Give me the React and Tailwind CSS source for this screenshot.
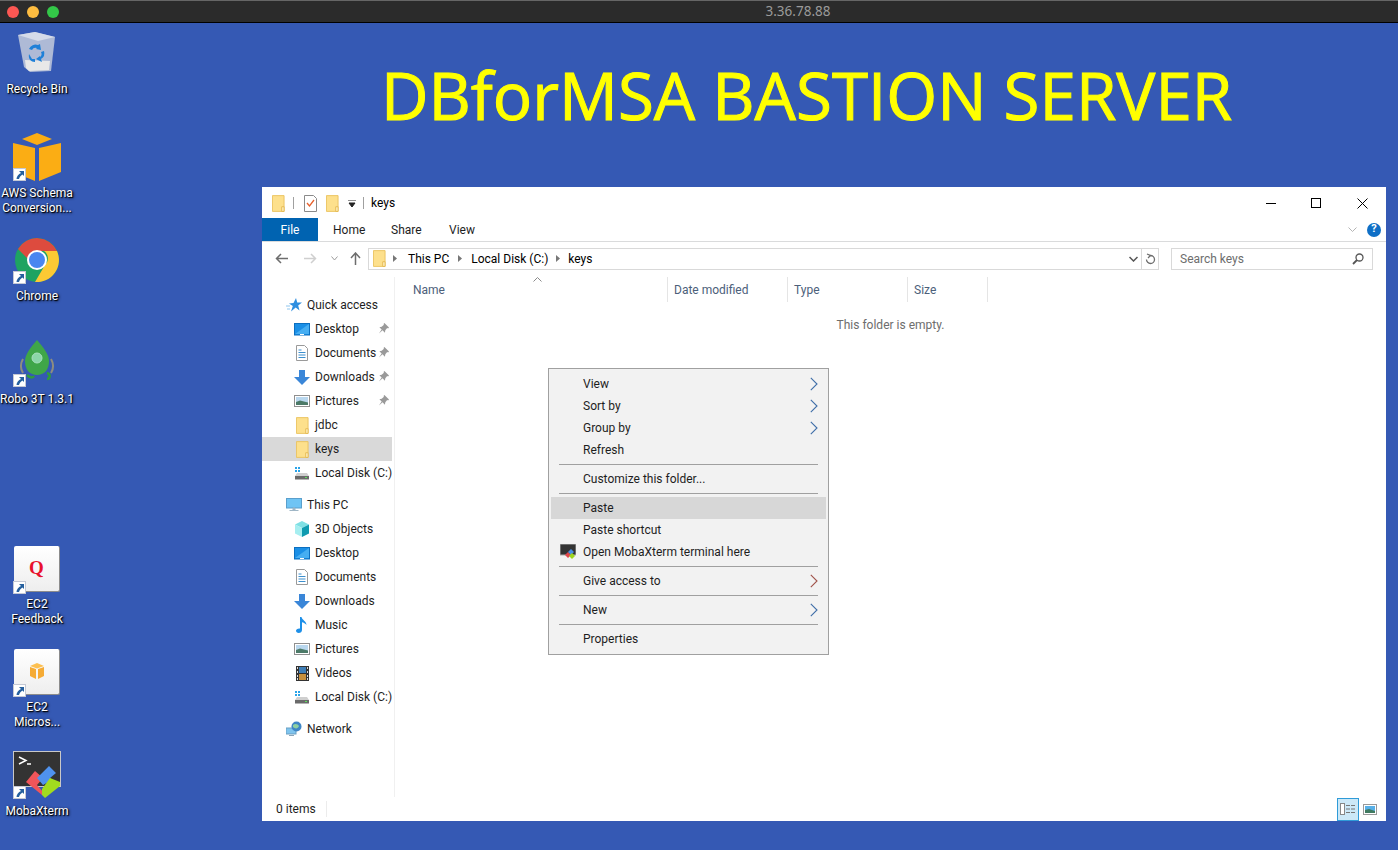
import React from 'react';

const FONT = "font-['Roboto',sans-serif]";

// shared little drawings
const FolderIcon = ({ className = '' }) => (
    <svg viewBox="0 0 14 18" className={className}>
        <path d="M.5.5h12.500v17H.5z" fill="#fde08c" stroke="#eac35e" />
        <path d="M10.500 12.500h2.500v5h-2.500z" fill="#fff3c8" stroke="#e4b84e" />
    </svg>
);

const ShortcutBadge = () => (
    <svg viewBox="0 0 13 13" className="absolute left-0 bottom-0 w-[13px] h-[13px]">
        <rect x=".5" y=".5" width="12" height="12" fill="#fff" stroke="#c4c8d4" />
        <path d="M6 3h5v5L9.500 6.500C7.500 8 6.500 9 6 11H3.500C3.500 8.500 5.500 6 8 5z" fill="#26609e" />
    </svg>
);

const Chevron = ({ color = '#3f6ea8' }) => (
    <svg viewBox="0 0 8 14" className="w-2 h-3.5">
        <path d="M.8.8L7 7 .8 13.200" fill="none" stroke={color} strokeWidth="1.100" />
    </svg>
);

const PinIcon = () => (
    <svg viewBox="0 0 12 12" className="w-[11px] h-[11px]">
        <path d="M7 0l5 5-1 1-1-.5L8 8l-.5 2.500L5 8 1 11.500 4 7 1.500 4.500 4 4l2.500-2L6 1z" fill="#9a9a9a" />
    </svg>
);

const DesktopIcon = () => (
    <svg viewBox="0 0 16 13" className="w-4 h-[13px]">
        <rect x=".5" y=".5" width="15" height="11.500" fill="#1a8fe6" stroke="#0b6fc0" />
        <path d="M1 11L15 1v10z" fill="#46aef2" />
        <path d="M6 11.500h4" stroke="#fff" />
    </svg>
);

const DocumentsIcon = () => (
    <svg viewBox="0 0 12 16" className="w-3 h-4">
        <path d="M.5.5h8l3 3v12H.500z" fill="#fff" stroke="#9a9a9a" />
        <path d="M2.500 5h3M2.500 7.500h7M2.500 10h7M2.500 12.500h7" stroke="#3c8fce" />
    </svg>
);

const DownloadsIcon = () => (
    <svg viewBox="0 0 16 15" className="w-4 h-[15px]">
        <path d="M5 0h6v7h5l-8 8-8-8h5z" fill="#3a86d8" />
    </svg>
);

const PicturesIcon = () => (
    <svg viewBox="0 0 16 12" className="w-4 h-3">
        <rect x=".5" y=".5" width="15" height="11" fill="#fff" stroke="#8f8f8f" />
        <rect x="2" y="2" width="12" height="8" fill="#b9d7ee" />
        <path d="M2 7l4-1.500 8 2V10H2z" fill="#4c7a68" />
    </svg>
);

const DiskIcon = () => (
    <svg viewBox="0 0 16 14" className="w-4 h-3.5">
        <path d="M1 1h2v2H1zM4 1h2v2H4zM1 4h2v2H1zM4 4h2v2H4z" fill="#29a3e8" />
        <path d="M1 10l2-3h10l2 3z" fill="#cfcfcf" />
        <rect x="1" y="10" width="14" height="3.500" fill="#6a6a6a" />
        <rect x="11" y="11" width="2" height="1" fill="#5ce35c" />
    </svg>
);

const PCIcon = () => (
    <svg viewBox="0 0 16 14" className="w-4 h-3.5">
        <rect x=".5" y=".5" width="15" height="9.500" fill="#6fc4f4" stroke="#5a9fcc" />
        <path d="M7 10h2v2H7zM3.500 12.500h9" fill="#9fb6c6" stroke="#9fb6c6" />
    </svg>
);

const CubeIcon = () => (
    <svg viewBox="0 0 16 16" className="w-4 h-4">
        <path d="M8 0l7 3.500L8 7 1 3.500z" fill="#7fe0e4" />
        <path d="M1 3.500L8 7v9l-7-3.500z" fill="#a6eef0" />
        <path d="M15 3.500L8 7v9l7-3.500z" fill="#0e9bb0" />
    </svg>
);

const MusicIcon = () => (
    <svg viewBox="0 0 12 16" className="w-3 h-4">
        <path d="M4 0h1.500c.5 3 5 4 5 8-1-1.500-3-2.500-4.500-2.800V13c0 1.800-1.500 3-3.200 3C1 16 0 15 0 13.800 0 12.300 1.500 11.300 4 11.500z" fill="#1d8fe8" />
    </svg>
);

const VideosIcon = () => (
    <svg viewBox="0 0 13 15" className="w-[13px] h-[15px]">
        <rect width="13" height="15" fill="#333" />
        <rect x="3" y="1" width="7" height="6" fill="#3f7fb8" />
        <rect x="3" y="8" width="7" height="6" fill="#c9913d" />
        <path d="M1 1h1v2H1zM1 5h1v2H1zM1 9h1v2H1zM1 12h1v2H1zM11 1h1v2h-1zM11 5h1v2h-1zM11 9h1v2h-1zM11 12h1v2h-1z" fill="#ddd" />
    </svg>
);

const StarIcon = () => (
    <svg viewBox="0 0 16 14" className="w-4 h-3.5">
        <path d="M10 0l1.200 4.500H16l-3.800 3 1.300 5-3.800-3-4.700 4 1.800-5.500L3 5.500l4.500-.5z" fill="#2f8fe0" />
        <path d="M0 8h4M1 11h3" stroke="#8fc6ee" />
    </svg>
);

const NetworkIcon = () => (
    <svg viewBox="0 0 16 16" className="w-4 h-4">
        <rect x="0" y="7" width="10" height="6" fill="#7fc4ee" stroke="#6a9fc2" />
        <path d="M3 14.500h5" stroke="#8aa5b8" />
        <circle cx="10.500" cy="5.500" r="5" fill="#3f86c6" />
        <path d="M7 4c2-2 5-1 6 1-1 3-4 3-6 1z" fill="#8fd0a0" />
    </svg>
);

const quickAccess = [
    { label: 'Desktop', icon: <DesktopIcon />, pin: true },
    { label: 'Documents', icon: <DocumentsIcon />, pin: true },
    { label: 'Downloads', icon: <DownloadsIcon />, pin: true },
    { label: 'Pictures', icon: <PicturesIcon />, pin: true },
    { label: 'jdbc', icon: <FolderIcon className="w-[13px] h-[17px]" /> },
    { label: 'keys', icon: <FolderIcon className="w-[13px] h-[17px]" />, active: true },
    { label: 'Local Disk (C:)', icon: <DiskIcon /> },
];

const thisPc = [
    { label: '3D Objects', icon: <CubeIcon /> },
    { label: 'Desktop', icon: <DesktopIcon /> },
    { label: 'Documents', icon: <DocumentsIcon /> },
    { label: 'Downloads', icon: <DownloadsIcon /> },
    { label: 'Music', icon: <MusicIcon /> },
    { label: 'Pictures', icon: <PicturesIcon /> },
    { label: 'Videos', icon: <VideosIcon /> },
    { label: 'Local Disk (C:)', icon: <DiskIcon /> },
];

const NavRow = ({ label, icon, pin, active }) => (
    <div className={`relative flex items-center h-6 mr-[2px] pl-[32px] ${active ? 'bg-[#d9d9d9]' : ''}`}>
        <span className="w-4 flex justify-center shrink-0">{icon}</span>
        <span className="ml-[5px] whitespace-nowrap">{label}</span>
        {pin && <span className="absolute left-[116px] top-[6px]"><PinIcon /></span>}
    </div>
);

const NavHead = ({ label, icon }) => (
    <div className="flex items-center h-6 pl-[24px]">
        <span className="w-4 flex justify-center shrink-0">{icon}</span>
        <span className="ml-[5px]">{label}</span>
    </div>
);

const MenuItem = ({ label, arrow, active, icon, arrowColor }) => (
    <div className={`relative flex items-center h-[22px] pl-[32px] pr-2 ${active ? 'bg-[#d7d7d7]' : ''}`}>
        {icon && <span className="absolute left-[9px] top-[3px]">{icon}</span>}
        <span className="flex-1">{label}</span>
        {arrow && <Chevron color={arrowColor} />}
    </div>
);

const MenuSep = () => <div className="h-px bg-[#a0a0a0] mx-2 my-[3px]" />;

const MobaSmall = () => (
    <svg viewBox="0 0 16 15" className="w-4 h-[15px]">
        <rect width="16" height="11" fill="#333" stroke="#aaa" />
        <path d="M5 11l3-3 3 3-3 3z" fill="#e0474c" />
        <path d="M8 8l3-3 3 3-3 3z" fill="#4a8fe8" />
        <path d="M9 12l3-3 3 3-3 3z" fill="#9ed61c" />
    </svg>
);

const DesktopItem = ({ pos, lines, labelGap, children }) => (
    <div className={`absolute w-[74px] flex flex-col items-center ${pos}`}>
        <div className="relative w-[48px] h-[48px]">{children}<ShortcutBadge /></div>
        <div className={`${labelGap} text-white text-[12px] leading-[15px] text-center whitespace-nowrap [text-shadow:1px_1px_1px_#000,1px_1px_3px_#000]`}>
            {lines.map((line) => <div key={line}>{line}</div>)}
        </div>
    </div>
);

const App = () => {
    return (
        <div className={`relative w-[1398px] h-[850px] overflow-hidden bg-[#3559b4] ${FONT}`}>
            {/* mac title bar */}
            <div className="relative h-[23px] bg-[#2b2b2b] border-b border-black border-t-[#666] border-t flex items-center justify-center pl-[198px]">
                <div className="absolute left-[7px] top-[5px] flex gap-2">
                    <span className="w-3 h-3 rounded-full bg-[#fc5753]" />
                    <span className="w-3 h-3 rounded-full bg-[#fdbc40]" />
                    <span className="w-3 h-3 rounded-full bg-[#33c748]" />
                </div>
                <span className="text-[#9a9a9a] text-[13.500px] font-['Noto_Sans',sans-serif]">3.36.78.88</span>
            </div>

            {/* wallpaper text */}
            <div className="absolute left-[381px] top-[50px] text-[#ffff00] text-[65.500px] [-webkit-text-stroke:1px_#ffff00] leading-[90px] whitespace-nowrap font-['Open_Sans',sans-serif]">
                DBforMSA BASTION SERVER
            </div>

            {/* desktop icons */}
            <div className="absolute left-0 top-[30px] w-[74px] flex flex-col items-center">
                <svg viewBox="0 0 40 44" className="w-10 h-11">
                    <path d="M1 5L18 2l20 5-4 34-21 1-6-5z" fill="#aebad6" />
                    <path d="M1 5L18 2l20 5-17 4z" fill="#d5dbe9" />
                    <path d="M8 30l25 1-1 9-20 1-3-3z" fill="#e8e8e8" />
                    <path d="M12 19a7 7 0 0 1 9-4l2-1 1 6-5-1 1-1a4 4 0 0 0-5 2zM27 21a7 7 0 0 1-3 8l1 3-6-3 4-3v1a4 4 0 0 0 1-5zM12 24l3 5h3v3c-4 0-7-3-6-8z" fill="#1f80d8" />
                </svg>
                <div className="mt-[8px] text-white text-[12px] leading-[15px] whitespace-nowrap [text-shadow:1px_1px_1px_#000,1px_1px_3px_#000]">Recycle Bin</div>
            </div>
            <DesktopItem pos="left-0 top-[133px]" labelGap="mt-[5px]" lines={['AWS Schema', 'Conversion...']}>
                <svg viewBox="0 0 48 48" className="w-12 h-12">
                    <path d="M24 0l15 6-15 6-15-6z" fill="#fbad14" />
                    <path d="M0 10l22 5v33L0 39z" fill="#fbad14" />
                    <path d="M48 10l-22 5v33l22-9z" fill="#fbad14" />
                </svg>
            </DesktopItem>
            <DesktopItem pos="left-0 top-[236px]" labelGap="mt-[5px]" lines={['Chrome']}>
                <svg viewBox="0 0 48 48" className="w-12 h-12">
                    <circle cx="24" cy="24" r="22" fill="#1ea362" />
                    <path d="M5 13A22 22 0 0 1 44 15H24a9 9 0 0 0-9 8z" fill="#dd4b3e" />
                    <path d="M44 15a22 22 0 0 1-22 31l10-17a9 9 0 0 0-1-14z" fill="#fcc934" />
                    <circle cx="24" cy="24" r="10" fill="#fff" />
                    <circle cx="24" cy="24" r="8" fill="#4a86f0" />
                </svg>
            </DesktopItem>
            <DesktopItem pos="left-0 top-[339px]" labelGap="mt-[5px]" lines={['Robo 3T 1.3.1']}>
                <svg viewBox="0 0 48 48" className="w-12 h-12">
                    <path d="M10 20c-3 5-3 9 0 14M38 20c3 5 3 9 0 14" fill="none" stroke="#8d8d80" strokeWidth="2" />
                    <path d="M24 1c7 8 12 15 12 21 0 9-5 14-12 14s-12-5-12-14c0-6 5-13 12-21z" fill="#3fa648" />
                    <circle cx="24" cy="19" r="5" fill="#8bd6a8" stroke="#a9e0bf" />
                    <path d="M14 36c3 3 6 3 7 1M34 34c4 1 3 6 0 6" fill="none" stroke="#2f9b3f" strokeWidth="2.500" />
                </svg>
            </DesktopItem>
            <DesktopItem pos="left-0 top-[546px]" labelGap="mt-[3px]" lines={['EC2', 'Feedback']}>
                <div className="w-[46px] h-[46px] ml-px bg-gradient-to-b from-white to-[#eeeeee] rounded-[2px] border-b border-r border-[#8c8c8c] flex items-center justify-center">
                    <span className="text-[#e8112d] text-[19px] font-bold font-['Liberation_Serif',serif]">Q</span>
                </div>
            </DesktopItem>
            <DesktopItem pos="left-0 top-[649px]" labelGap="mt-[3px]" lines={['EC2', 'Micros...']}>
                <div className="w-[46px] h-[46px] ml-px bg-gradient-to-b from-white to-[#eeeeee] rounded-[2px] border-b border-r border-[#8c8c8c] flex items-center justify-center">
                    <svg viewBox="0 0 16 16" className="w-4 h-4 mb-0.5">
                        <path d="M8 0l7 3-7 2.500L1 3z" fill="#fdc050" />
                        <path d="M1 4l6 2v10l-6-3zM15 4L9 6v10l6-3z" fill="#f5ab35" />
                    </svg>
                </div>
            </DesktopItem>
            <DesktopItem pos="left-0 top-[751px]" labelGap="mt-[5px]" lines={['MobaXterm']}>
                <svg viewBox="0 0 48 48" className="w-12 h-12">
                    <rect x=".500" y=".500" width="47" height="35" fill="#333" stroke="#c8c8c8" />
                    <path d="M6 6l7 3.500L6 13M14 13h4" fill="none" stroke="#fff" strokeWidth="1.500" />
                    <path d="M13 31l9-11 8 7-6 7 6 7-1 3z" fill="#f0555a" />
                    <path d="M24 27l12-12 7 7-6 5 2 2-9 5z" fill="#4f92ee" />
                    <path d="M29 38l8-11 10 4v4L32 47l-3-3z" fill="#a2dc1e" />
                </svg>
            </DesktopItem>

            {/* explorer window */}
            <div className="absolute left-[262px] top-[187px] w-[1124px] h-[634px] bg-white flex flex-col text-[12px] text-[#1e1e1e]">
                {/* title row */}
                <div className="h-[31px] flex items-center pl-[10px] pt-px shrink-0">
                    <FolderIcon className="w-[13px] h-[17px]" />
                    <span className="w-px h-3 bg-[#a0a0a0] ml-[8px]" />
                    <svg viewBox="0 0 13 17" className="w-[13px] h-[17px] ml-[10px]">
                        <path d="M.5.5h9l3 3v13H.500z" fill="#fff" stroke="#8a8a8a" />
                        <path d="M3 8l2.500 3L10 5" fill="none" stroke="#e8612c" strokeWidth="1.300" />
                    </svg>
                    <FolderIcon className="w-[13px] h-[17px] ml-[9px]" />
                    <svg viewBox="0 0 8 7" className="w-2 h-[7px] ml-[9px]">
                        <path d="M0 0h8M1 3h6l-3 4z" stroke="#222" fill="#222" />
                    </svg>
                    <span className="w-px h-3 bg-[#a0a0a0] ml-[7px]" />
                    <span className="ml-[7px] text-black">keys</span>
                    <div className="ml-auto flex items-center">
                        <span className="w-[10px] h-px bg-black mr-[35px]" />
                        <span className="w-[10px] h-[10px] border border-black mr-[36px]" />
                        <svg viewBox="0 0 11 11" className="w-[11px] h-[11px] mr-[18px]">
                            <path d="M.5.5l10 10M10.500.5l-10 10" stroke="#000" />
                        </svg>
                    </div>
                </div>

                {/* ribbon tabs */}
                <div className="h-[23px] flex items-center border-b border-[#dadbdc] shrink-0 box-content">
                    <div className="w-[56px] h-[23px] pt-px bg-[#0063b1] text-white flex items-center justify-center">File</div>
                    <span className="ml-[15px] w-[30px] pt-px">Home</span>
                    <span className="ml-[28px] w-[29px] pt-px">Share</span>
                    <span className="ml-[29px] w-[30px] pt-px">View</span>
                    <div className="ml-auto flex items-center mr-[5px]">
                        <svg viewBox="0 0 9 5" className="w-[9px] h-[5px] mr-[10px]">
                            <path d="M.5.5l4 4 4-4" fill="none" stroke="#b4b4b4" />
                        </svg>
                        <span className="w-[14px] h-[14px] rounded-full bg-[#0f6fc6] text-white text-[11px] font-bold flex items-center justify-center">?</span>
                    </div>
                </div>

                {/* address row */}
                <div className="h-[35px] flex items-center shrink-0 pb-[2px]">
                    <svg viewBox="0 0 13 11" className="w-[13px] h-[11px] ml-[13px]">
                        <path d="M6 1L1.500 5.500 6 10M1.500 5.500H13" fill="none" stroke="#6d6d6d" strokeWidth="1.500" />
                    </svg>
                    <svg viewBox="0 0 13 11" className="w-[13px] h-[11px] ml-[16px]">
                        <path d="M7 1l4.500 4.500L7 10M11.500 5.500H0" fill="none" stroke="#cfcfcf" strokeWidth="1.500" />
                    </svg>
                    <svg viewBox="0 0 7 5" className="w-[7px] h-[5px] ml-[14px]">
                        <path d="M.5.5L3.500 4l3-3.500" fill="none" stroke="#9c9c9c" />
                    </svg>
                    <svg viewBox="0 0 11 13" className="w-[11px] h-[13px] ml-[12px]">
                        <path d="M1 6l4.500-5L10 6M5.500 1v12" fill="none" stroke="#6d6d6d" strokeWidth="1.500" />
                    </svg>
                    <div className="ml-[7px] w-[791px] h-[22px] border border-[#d9d9d9] flex items-center text-black">
                        <FolderIcon className="ml-[4px] w-[13px] h-[17px]" />
                        <svg viewBox="0 0 4 7" className="w-1 h-[7px] ml-[7px]"><path d="M0 0l4 3.500L0 7z" fill="#777" /></svg>
                        <span className="ml-[11px]">This PC</span>
                        <svg viewBox="0 0 4 7" className="w-1 h-[7px] ml-[9px]"><path d="M0 0l4 3.500L0 7z" fill="#777" /></svg>
                        <span className="ml-[9px]">Local Disk (C:)</span>
                        <svg viewBox="0 0 4 7" className="w-1 h-[7px] ml-[8px]"><path d="M0 0l4 3.500L0 7z" fill="#777" /></svg>
                        <span className="ml-[8px]">keys</span>
                        <svg viewBox="0 0 9 6" className="w-[9px] h-1.5 ml-auto mr-[3px]">
                            <path d="M.5 1l4 4 4-4" fill="none" stroke="#555" strokeWidth="1.500" />
                        </svg>
                        <span className="w-[17px] h-full border-l border-[#d9d9d9] flex items-center justify-center">
                            <svg viewBox="0 0 11 12" className="w-[11px] h-3">
                                <path d="M5.500 2.500a4 4 0 1 1-4 4M2 1l3.500 1.500L3 5" fill="none" stroke="#6d6d6d" strokeWidth="1.300" />
                            </svg>
                        </span>
                    </div>
                    <div className="ml-[12px] w-[202px] h-[22px] border border-[#d9d9d9] flex items-center pl-2 pr-[8px] text-[#6d6d6d]">
                        <span className="flex-1">Search keys</span>
                        <svg viewBox="0 0 12 12" className="w-3 h-3">
                            <circle cx="7.500" cy="4.500" r="3.500" fill="none" stroke="#555" strokeWidth="1.300" />
                            <path d="M5 7l-4 4" stroke="#555" strokeWidth="1.800" />
                        </svg>
                    </div>
                </div>

                {/* main area */}
                <div className="flex-1 flex min-h-0">
                    <div className="w-[133px] border-r border-[#f0f0f0] pt-[16px] shrink-0">
                        <NavHead label="Quick access" icon={<StarIcon />} />
                        {quickAccess.map((item, index) => <NavRow key={index} {...item} />)}
                        <div className="h-2" />
                        <NavHead label="This PC" icon={<PCIcon />} />
                        {thisPc.map((item, index) => <NavRow key={index} {...item} />)}
                        <div className="h-2" />
                        <NavHead label="Network" icon={<NetworkIcon />} />
                    </div>
                    <div className="flex-1 relative">
                        <div className="flex h-[25px] items-center text-[#4c607a]">
                            <div className="relative w-[273px] pl-[18px] h-full flex items-center border-r border-[#e5e5e5]">
                                Name
                                <svg viewBox="0 0 9 5" className="absolute left-[138px] top-0 w-[9px] h-[5px]">
                                    <path d="M.5 4.500l4-4 4 4" fill="none" stroke="#8a8a8a" />
                                </svg>
                            </div>
                            <div className="w-[120px] pl-[6px] h-full flex items-center border-r border-[#e5e5e5]">Date modified</div>
                            <div className="w-[120px] pl-[6px] h-full flex items-center border-r border-[#e5e5e5]">Type</div>
                            <div className="w-[80px] pl-[6px] h-full flex items-center border-r border-[#e5e5e5]">Size</div>
                        </div>
                        <div className="mt-[14px] text-center text-[#6d6d6d]">This folder is empty.</div>
                    </div>
                </div>

                {/* status bar */}
                <div className="h-[24px] flex items-center shrink-0 pl-[14px]">
                    <span className="w-[51px] border-r border-[#ececec] h-4 leading-4">0 items</span>
                    <div className="ml-auto flex items-center mr-[9px]">
                        <span className="w-[22px] h-[23px] border border-[#2f9bd8] bg-[#cce8f7] flex items-center justify-center">
                            <svg viewBox="0 0 16 12" className="w-4 h-3">
                                <rect x=".5" y=".5" width="4" height="11" fill="#fff" stroke="#888" />
                                <path d="M6 2.500h4M11 2.500h4M6 6h4M11 6h4M6 9.500h4M11 9.500h4" stroke="#777" />
                            </svg>
                        </span>
                        <svg viewBox="0 0 14 11" className="w-3.5 h-[11px] ml-[4px]">
                            <rect x=".5" y=".5" width="13" height="10" fill="#fff" stroke="#999" />
                            <rect x="2" y="2" width="10" height="7" fill="#58b0e8" />
                            <path d="M2 6l4-1 6 2v2H2z" fill="#3f7a60" />
                        </svg>
                    </div>
                </div>
            </div>

            {/* context menu */}
            <div className="absolute left-[548px] top-[368px] w-[281px] h-[287px] bg-[#f2f2f2] border border-[#a0a0a0] p-[2px] pt-[4px] text-[12px] text-[#1e1e1e]">
                <MenuItem label="View" arrow />
                <MenuItem label="Sort by" arrow />
                <MenuItem label="Group by" arrow />
                <MenuItem label="Refresh" />
                <MenuSep />
                <MenuItem label="Customize this folder..." />
                <MenuSep />
                <MenuItem label="Paste" active />
                <MenuItem label="Paste shortcut" />
                <MenuItem label="Open MobaXterm terminal here" icon={<MobaSmall />} />
                <MenuSep />
                <MenuItem label="Give access to" arrow arrowColor="#a0524a" />
                <MenuSep />
                <MenuItem label="New" arrow />
                <MenuSep />
                <MenuItem label="Properties" />
            </div>
        </div>
    );
};

export default App;
